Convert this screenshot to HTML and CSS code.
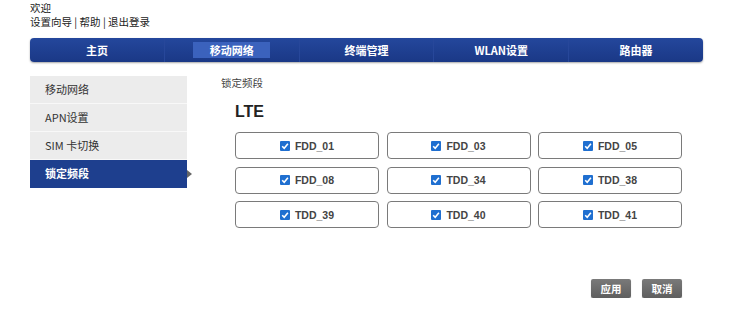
FILE: index.html
```html
<!DOCTYPE html>
<html lang="zh-CN">
<head>
  <meta charset="UTF-8">
  <title>锁定频段</title>
  <link rel="stylesheet" href="styles.css">
</head>
<body>
  <div class="header">
    <div>欢迎</div>
    <div class="links">设置向导 | 帮助 | 退出登录</div>
  </div>

  <div class="nav">
    <div class="tab"><span>主页</span></div>
    <div class="tab active"><span>移动网络</span></div>
    <div class="tab"><span>终端管理</span></div>
    <div class="tab"><span>WLAN设置</span></div>
    <div class="tab"><span>路由器</span></div>
  </div>

  <div class="main">
    <div class="side">
      <div class="side-item">移动网络</div>
      <div class="side-item">APN设置</div>
      <div class="side-item">SIM 卡切换</div>
      <div class="side-item active">锁定频段</div>
    </div>

    <div class="content">
      <div class="crumb">锁定频段</div>
      <h2>LTE</h2>
      <div class="bands">
        <label class="band"><span class="cb"><svg viewBox="0 0 10 10"><path d="M2.2 5.2 4.2 7.2 7.9 2.8" /></svg></span>FDD_01</label>
        <label class="band"><span class="cb"><svg viewBox="0 0 10 10"><path d="M2.2 5.2 4.2 7.2 7.9 2.8" /></svg></span>FDD_03</label>
        <label class="band"><span class="cb"><svg viewBox="0 0 10 10"><path d="M2.2 5.2 4.2 7.2 7.9 2.8" /></svg></span>FDD_05</label>
        <label class="band"><span class="cb"><svg viewBox="0 0 10 10"><path d="M2.2 5.2 4.2 7.2 7.9 2.8" /></svg></span>FDD_08</label>
        <label class="band"><span class="cb"><svg viewBox="0 0 10 10"><path d="M2.2 5.2 4.2 7.2 7.9 2.8" /></svg></span>TDD_34</label>
        <label class="band"><span class="cb"><svg viewBox="0 0 10 10"><path d="M2.2 5.2 4.2 7.2 7.9 2.8" /></svg></span>TDD_38</label>
        <label class="band"><span class="cb"><svg viewBox="0 0 10 10"><path d="M2.2 5.2 4.2 7.2 7.9 2.8" /></svg></span>TDD_39</label>
        <label class="band"><span class="cb"><svg viewBox="0 0 10 10"><path d="M2.2 5.2 4.2 7.2 7.9 2.8" /></svg></span>TDD_40</label>
        <label class="band"><span class="cb"><svg viewBox="0 0 10 10"><path d="M2.2 5.2 4.2 7.2 7.9 2.8" /></svg></span>TDD_41</label>
      </div>
      <div class="actions">
        <button class="btn">应用</button>
        <button class="btn">取消</button>
      </div>
    </div>
  </div>
</body>
</html>
```

FILE: styles.css
```css
html, body {
  margin: 0;
  padding: 0;
  background: #fff;
  font-family: "Noto Sans CJK SC", "Liberation Sans", sans-serif;
  color: #222;
}
.header {
  padding: 1px 30px 0;
  font-size: 10.5px;
  line-height: 13.5px;
}
.nav {
  display: flex;
  margin: 10px 39px 0 30px;
  height: 24px;
  border-radius: 4px;
  background: linear-gradient(#24479c, #1a3886);
  box-shadow: 0 1px 2px rgba(0, 0, 0, 0.35);
}
.tab {
  flex: 1;
  display: flex;
  align-items: center;
  justify-content: center;
  color: #fff;
  font-size: 11px;
  font-weight: bold;
  border-left: 1px solid #27479a;
}
.tab:first-child {
  border-left: none;
}
.tab span {
  padding: 1px 0;
}
.tab.active span {
  background: #3b62bd;
  width: 77px;
  text-align: center;
  line-height: 14px;
}
.main {
  display: flex;
  margin-top: 14px;
  padding-left: 30px;
}
.side {
  width: 157px;
}
.side-item {
  position: relative;
  height: 27px;
  line-height: 27px;
  padding-left: 15px;
  font-size: 11px;
  color: #333;
  background: #ececec;
  border-bottom: 1px solid #f8f8f8;
}
.side-item.active {
  background: #1e3f8e;
  color: #fff;
  font-weight: bold;
  border-bottom: none;
  height: 28px;
}
.side-item.active::after {
  content: "";
  position: absolute;
  right: -5px;
  top: 10px;
  border-left: 5px solid #666;
  border-top: 4px solid transparent;
  border-bottom: 4px solid transparent;
}
.content {
  margin-left: 34px;
  width: 461px;
}
.crumb {
  font-size: 10.5px;
  color: #444;
  line-height: 12px;
  padding-top: 1px;
}
h2 {
  margin: 15px 0 0 14px;
  font-family: "Liberation Sans", sans-serif;
  font-size: 16px;
  font-weight: bold;
  color: #222;
  line-height: 16px;
}
.bands {
  display: grid;
  grid-template-columns: repeat(3, 144px);
  grid-auto-rows: 27px;
  column-gap: 7.5px;
  row-gap: 7.5px;
  margin: 12px 0 0 14px;
}
.band {
  display: flex;
  align-items: center;
  justify-content: center;
  border: 1px solid #7a7a7a;
  border-radius: 4px;
  font-family: "Liberation Sans", sans-serif;
  font-size: 10.5px;
  font-weight: bold;
  color: #444;
  box-sizing: border-box;
}
.cb {
  width: 10px;
  height: 10px;
  margin-right: 5px;
  border-radius: 1px;
  background: #1f6fd0;
}
.cb svg {
  display: block;
  width: 10px;
  height: 10px;
  fill: none;
  stroke: #fff;
  stroke-width: 1.6;
}
.actions {
  display: flex;
  justify-content: flex-end;
  gap: 11px;
  margin: 51px 0 0;
}
.btn {
  width: 40px;
  height: 19px;
  padding: 0;
  border: none;
  border-radius: 2px;
  background: linear-gradient(#7a7a7a, #5e5e5e);
  color: #fff;
  font-family: "Noto Sans CJK SC", sans-serif;
  font-size: 10.5px;
  font-weight: bold;
  box-shadow: 0 1px 1px rgba(0, 0, 0, 0.3);
}
```
